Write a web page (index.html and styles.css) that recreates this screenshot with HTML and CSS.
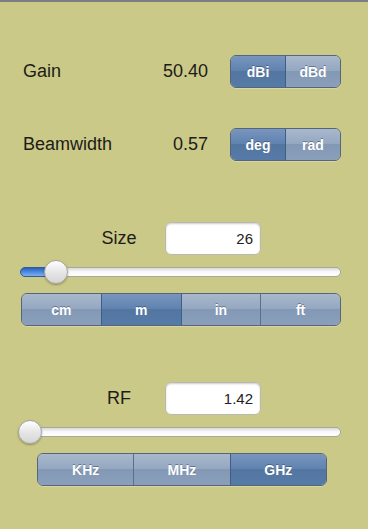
FILE: index.html
```html
<!DOCTYPE html>
<html lang="en">
<head>
    <meta charset="UTF-8">
    <meta name="viewport" content="width=device-width, initial-scale=1.0">
    <title>Antenna Calculator</title>
    <link rel="stylesheet" href="styles.css">
</head>
<body>
    <div class="calc">
        <div class="result-row first">
            <span class="label">Gain</span>
            <span class="value">50.40</span>
            <div class="segmented small">
                <button class="selected">dBi</button>
                <button>dBd</button>
            </div>
        </div>

        <div class="result-row">
            <span class="label">Beamwidth</span>
            <span class="value">0.57</span>
            <div class="segmented small">
                <button class="selected">deg</button>
                <button>rad</button>
            </div>
        </div>

        <div class="input-row size">
            <span class="input-label">Size</span>
            <input class="field" type="text" value="26">
        </div>
        <div class="slider">
            <div class="track"></div>
            <div class="fill" style="width: 36px"></div>
            <div class="thumb" style="left: 24px"></div>
        </div>
        <div class="segmented wide">
            <button>cm</button>
            <button class="selected">m</button>
            <button>in</button>
            <button>ft</button>
        </div>

        <div class="input-row rf">
            <span class="input-label">RF</span>
            <input class="field" type="text" value="1.42">
        </div>
        <div class="slider">
            <div class="track"></div>
            <div class="thumb" style="left: -2px"></div>
        </div>
        <div class="segmented freq">
            <button>KHz</button>
            <button>MHz</button>
            <button class="selected">GHz</button>
        </div>
    </div>
</body>
</html>
```

FILE: styles.css
```css
html, body {
    height: 100%;
}
body {
    margin: 0;
    background-color: #cbc987;
    border-top: 2px solid #7a7f80;
    box-sizing: border-box;
    font-family: "Liberation Sans", Arial, sans-serif;
    overflow: hidden;
}
.calc {
    padding: 53px 27px 0 20px;
}

/* result rows */
.result-row {
    display: grid;
    grid-template-columns: 1fr auto 111px;
    column-gap: 22px;
    align-items: center;
    height: 33px;
    margin-top: 40px;
    padding-left: 3px;
}
.result-row.first {
    margin-top: 0;
}
.label, .value, .input-label {
    font-size: 18px;
    color: #1c1c18;
}

/* segmented controls */
.segmented {
    display: flex;
    height: 33px;
    box-sizing: border-box;
    border: 1px solid #55657c;
    border-radius: 6px;
    overflow: hidden;
    box-shadow: 0 1px 0 rgba(255, 255, 255, 0.25);
}
.segmented button {
    flex: 1;
    margin: 0;
    padding: 0;
    border: none;
    border-left: 1px solid #5b6f8c;
    font-family: "Liberation Sans", Arial, sans-serif;
    font-size: 14px;
    font-weight: bold;
    color: #fff;
    text-shadow: 0 -1px 0 rgba(40, 50, 70, 0.45);
    background: linear-gradient(#a9b8cc, #93a7c0 50%, #8298b5 50%, #8a9fba);
}
.segmented button:first-child {
    border-left: none;
}
.segmented button.selected {
    border-left-color: #405d85;
    background: linear-gradient(#7895bd, #5f82b0 50%, #52769f 50%, #577ba8);
}
.segmented button.selected + button {
    border-left-color: #405d85;
}
.segmented.wide {
    margin: 9px 0 0 1px;
}
.segmented.freq {
    margin: 9px 14px 0 17px;
}

/* input rows */
.input-row {
    display: flex;
    align-items: center;
    height: 33px;
}
.input-row.size {
    margin-top: 61px;
}
.input-row.rf {
    margin-top: 56px;
}
.input-label {
    width: 92px;
    margin-left: 53px;
    text-align: center;
}
.field {
    width: 96px;
    height: 33px;
    box-sizing: border-box;
    border: 1px solid #b9b9b0;
    border-radius: 6px;
    padding: 0 7px;
    text-align: right;
    font-family: "Liberation Sans", Arial, sans-serif;
    font-size: 15px;
    color: #222;
    background: #fff;
    box-shadow: inset 0 1px 2px rgba(0, 0, 0, 0.2);
}

/* sliders */
.slider {
    position: relative;
    height: 24px;
    margin-top: 5px;
}
.track {
    position: absolute;
    left: 0;
    right: 0;
    top: 7px;
    height: 10px;
    box-sizing: border-box;
    border: 1px solid #a8a8a0;
    border-radius: 5px;
    background: linear-gradient(#d8d8d8, #f8f8f8 45%, #ffffff);
}
.fill {
    position: absolute;
    left: 0;
    top: 7px;
    height: 10px;
    box-sizing: border-box;
    border: 1px solid #2f5d9c;
    border-radius: 5px 0 0 5px;
    background: linear-gradient(#2d62b5, #4d8ae0 50%, #7fb0ee);
}
.thumb {
    position: absolute;
    top: 0;
    width: 24px;
    height: 24px;
    box-sizing: border-box;
    border: 1px solid #a5a5a0;
    border-radius: 50%;
    background: linear-gradient(#ffffff, #e4e4e4 55%, #d6d6d6);
    box-shadow: 0 1px 2px rgba(0, 0, 0, 0.3);
}
```
